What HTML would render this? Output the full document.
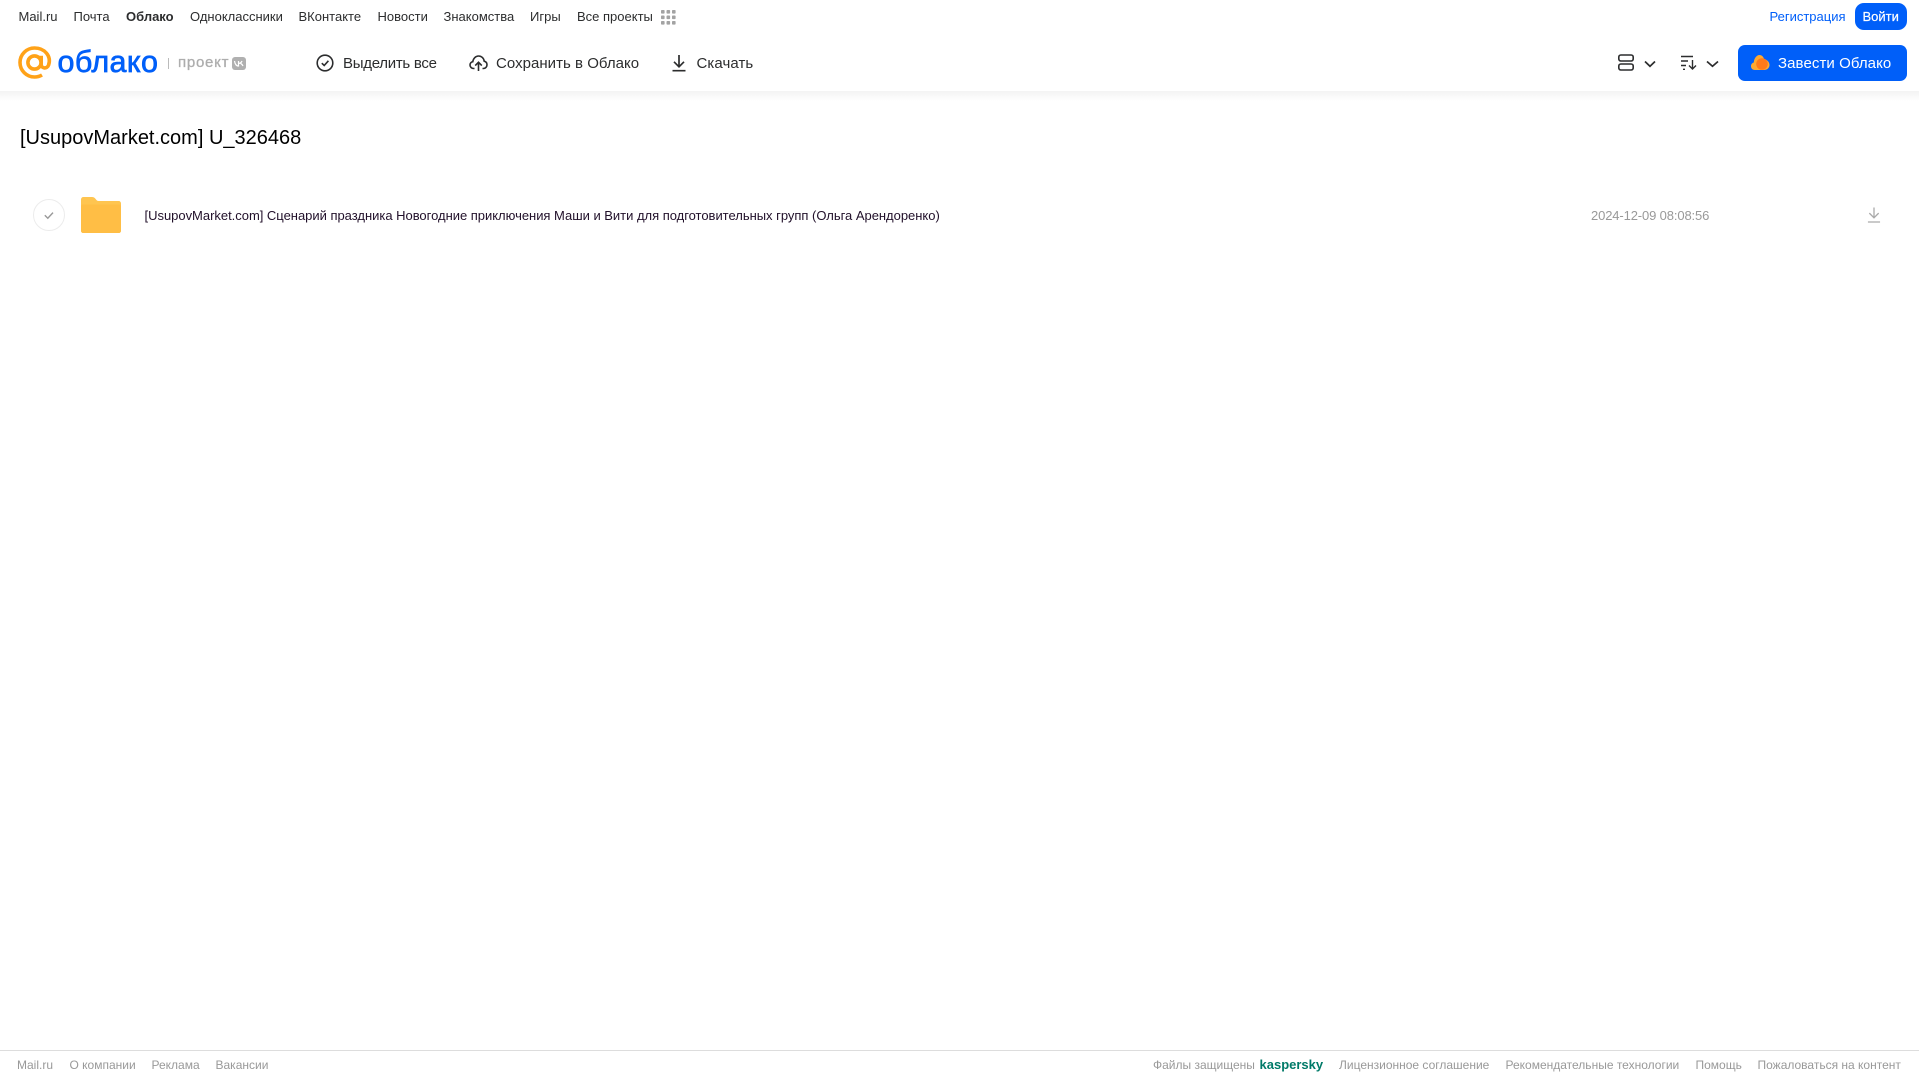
<!DOCTYPE html>
<html lang="ru">
<head>
<meta charset="utf-8">
<title>Облако</title>
<style>
html,body{margin:0;padding:0;background:#fff;}
body{width:1919px;height:1079px;position:relative;overflow:hidden;font-family:"Liberation Sans",Arial,sans-serif;color:#2c2d2e;}
.t{position:absolute;white-space:nowrap;}
.n{top:8px;font-size:13px;line-height:17px;color:#2c2d2e;}
.a{top:54px;font-size:15px;line-height:19px;color:#2c2d2e;}
.f{top:1057px;font-size:12px;line-height:16px;color:#999;}
svg{position:absolute;overflow:visible;}
</style>
</head>
<body>
<span class="t n" style="left:18.5px">Mail.ru</span>
<span class="t n" style="left:73.5px">Почта</span>
<span class="t n" style="left:126px;font-weight:700">Облако</span>
<span class="t n" style="left:190px">Одноклассники</span>
<span class="t n" style="left:298.5px">ВКонтакте</span>
<span class="t n" style="left:377.5px">Новости</span>
<span class="t n" style="left:443.5px">Знакомства</span>
<span class="t n" style="left:530px">Игры</span>
<span class="t n" style="left:577px">Все проекты</span>
<svg style="left:661px;top:10px" width="15" height="15" fill="#a3a3a3">
<rect x="0" y="0" width="3.6" height="3.6" rx=".8"/><rect x="5.5" y="0" width="3.6" height="3.6" rx=".8"/><rect x="11" y="0" width="3.6" height="3.6" rx=".8"/>
<rect x="0" y="5.5" width="3.6" height="3.6" rx=".8"/><rect x="5.5" y="5.5" width="3.6" height="3.6" rx=".8"/><rect x="11" y="5.5" width="3.6" height="3.6" rx=".8"/>
<rect x="0" y="11" width="3.6" height="3.6" rx=".8"/><rect x="5.5" y="11" width="3.6" height="3.6" rx=".8"/><rect x="11" y="11" width="3.6" height="3.6" rx=".8"/>
</svg>
<span class="t n" style="left:1769.5px;color:#005ff9">Регистрация</span>
<div style="position:absolute;left:1854.5px;top:3px;width:52.5px;height:27px;border-radius:9px;background:#005ff9"></div>
<span class="t n" style="left:1862.5px;color:#fff;-webkit-text-stroke:.2px #fff">Войти</span>

<div style="position:absolute;left:0;top:91px;width:1919px;height:10px;background:linear-gradient(#f3f3f3,#fff)"></div>

<svg style="left:18px;top:46px" width="34" height="34" viewBox="0 0 34 34" fill="none" stroke="#ffa218" stroke-width="3.6">
<circle cx="16.5" cy="16.5" r="6.6"/>
<path d="M23.2 9.8V18.5C23.2 22.6 29 23.4 30.6 19C33.6 10 26.6 2 16.5 2C8.5 2 2 8.5 2 16.5C2 24.5 8.5 31 16.5 31C19.6 31 22 30.2 24 29"/>
</svg>
<span class="t" style="left:57.5px;top:43px;font-size:30.5px;line-height:38px;color:#005ff9;-webkit-text-stroke:.7px #005ff9;letter-spacing:.4px">облако</span>
<div style="position:absolute;left:168px;top:58px;width:1px;height:11px;background:#bbb"></div>
<span class="t" style="left:178px;top:53px;font-size:15px;line-height:19px;color:#adadad;-webkit-text-stroke:.3px #adadad;letter-spacing:.75px">проект</span>
<div style="position:absolute;left:232px;top:57px;width:14px;height:13px;border-radius:3px;background:#b0b0b0"></div>
<svg style="left:234px;top:60px" width="10" height="7" fill="none" stroke="#fff" stroke-width="1.2"><path d="M.5 1C1 4 2.5 6 4.5 6V1M4.5 3.5C6 3.4 7.4 2.5 8 1M6.5 3.3C7.6 3.8 8.6 5 9 6"/></svg>

<svg style="left:316px;top:54px" width="18" height="18" viewBox="0 0 18 18" fill="none" stroke="#2c2d2e" stroke-width="1.6"><circle cx="9" cy="9" r="7.8"/><path d="M5.8 9.2L8.2 11.5L12.4 6.8"/></svg>
<span class="t a" style="left:343px;letter-spacing:-.28px">Выделить все</span>

<svg style="left:469px;top:54px" width="19" height="18" viewBox="0 0 19 18" fill="none" stroke="#2c2d2e" stroke-width="1.6"><path d="M5.5 14.5H4.6C2.6 14.5 1 13 1 11C1 9.3 2.2 8 3.8 7.7C4.2 4.5 6.6 2 9.6 2C12.5 2 14.8 4.2 15.2 7.2C16.9 7.6 18 9 18 10.8C18 12.9 16.4 14.5 14.4 14.5H13.5"/><path d="M9.5 17V8.5M6.2 11.6L9.5 8.3L12.8 11.6"/></svg>
<span class="t a" style="left:496px;letter-spacing:.03px">Сохранить в Облако</span>

<svg style="left:671px;top:54px" width="16" height="18" viewBox="0 0 16 18" fill="none" stroke="#2c2d2e" stroke-width="1.7"><path d="M8 1V12.5M3 7.8L8 12.8L13 7.8M1.5 16.7H14.5"/></svg>
<span class="t a" style="left:696.5px;letter-spacing:.08px">Скачать</span>

<svg style="left:1618px;top:54px" width="16" height="17" viewBox="0 0 16 17" fill="none" stroke="#2c2d2e" stroke-width="1.6"><rect x=".8" y="1" width="14.4" height="6" rx="2"/><rect x=".8" y="10" width="14.4" height="6" rx="2"/></svg>
<svg style="left:1644px;top:60px" width="12" height="8" viewBox="0 0 12 8" fill="none" stroke="#2c2d2e" stroke-width="1.7"><path d="M1 1.5L6 6.3L11 1.5"/></svg>
<svg style="left:1681px;top:55px" width="16" height="15" viewBox="0 0 16 15" fill="none" stroke="#2c2d2e" stroke-width="1.4"><path d="M0 1.5H12M0 6H7M0 10.5H5M2 14.3H4"/><path d="M11.5 5V14M8 10.5L11.5 14L15 10.5"/></svg>
<svg style="left:1705.5px;top:60px" width="13" height="8" viewBox="0 0 13 8" fill="none" stroke="#2c2d2e" stroke-width="1.7"><path d="M1 1.5L6.5 6.3L12 1.5"/></svg>

<div style="position:absolute;left:1738px;top:45px;width:169px;height:36px;border-radius:7px;background:#005ff9"></div>
<svg style="left:1750px;top:54px" width="20" height="17" viewBox="0 0 20 17">
<path d="M5 16C2 16 1 14 1 12C1 10 2.5 8.8 3.8 8.5C4 4.5 6.5 1 9.5 1C12 1 13.5 3 14 5C17 5.5 19.5 8 19.5 11C19.5 14 17 16 14 16Z" fill="#ffa930"/>
<circle cx="12" cy="10" r="5.8" fill="#ff7a1a"/>
</svg>
<span class="t a" style="left:1778px;color:#fff;letter-spacing:.08px">Завести Облако</span>

<span class="t" style="left:20px;top:126px;font-size:20px;line-height:25px;color:#000">[UsupovMarket.com] U_326468</span>

<svg style="left:33px;top:199px" width="32" height="32" viewBox="0 0 32 32" fill="none"><circle cx="16" cy="16" r="15.5" stroke="#ececec"/><path d="M11.8 16.3L14.8 19.2L20 13.6" stroke="#999" stroke-width="1.4"/></svg>
<svg style="left:81px;top:197px" width="40" height="36" viewBox="0 0 41 36" preserveAspectRatio="none">
<path d="M0 2.5C0 1 1 0 2.5 0H11C13 0 14 .8 15 2C16 3.4 16.7 4 18 4H38.5C40 4 41 5 41 6.5V33.5C41 35 40 36 38.5 36H2.5C1 36 0 35 0 33.5Z" fill="#ffc550"/>
<path d="M0 9.5C0 8.2 .8 7.5 2 7.5H39C40.2 7.5 41 8.2 41 9.5V33.5C41 35 40 36 38.5 36H2.5C1 36 0 35 0 33.5Z" fill="#ffbe45"/>
</svg>
<span class="t" style="left:144.5px;top:207px;font-size:13px;line-height:17px;color:#21102a;letter-spacing:-.02px">[UsupovMarket.com] Сценарий праздника Новогодние приключения Маши и Вити для подготовительных групп (Ольга Арендоренко)</span>
<span class="t" style="left:1591px;top:207px;font-size:13px;line-height:17px;color:#999;letter-spacing:-.13px">2024-12-09 08:08:56</span>
<svg style="left:1866.5px;top:206px" width="14" height="18" viewBox="0 0 15 18" fill="none" stroke="#aaa" stroke-width="1.4"><path d="M7.5 1V12M2.5 7L7.5 12L12.5 7M1 16.5H14"/></svg>

<div style="position:absolute;left:0;top:1050px;width:1919px;height:1px;background:#ddd"></div>
<span class="t f" style="left:17px">Mail.ru</span>
<span class="t f" style="left:69.5px">О компании</span>
<span class="t f" style="left:151.5px">Реклама</span>
<span class="t f" style="left:215.5px">Вакансии</span>
<span class="t f" style="left:1153px">Файлы защищены</span>
<span class="t" style="left:1259.5px;top:1057px;font-size:13px;line-height:16px;color:#007a68;font-weight:700">kaspersky</span>
<span class="t f" style="left:1339px">Лицензионное соглашение</span>
<span class="t f" style="left:1505.5px">Рекомендательные технологии</span>
<span class="t f" style="left:1695.5px">Помощь</span>
<span class="t f" style="left:1757.5px">Пожаловаться на контент</span>
</body>
</html>
